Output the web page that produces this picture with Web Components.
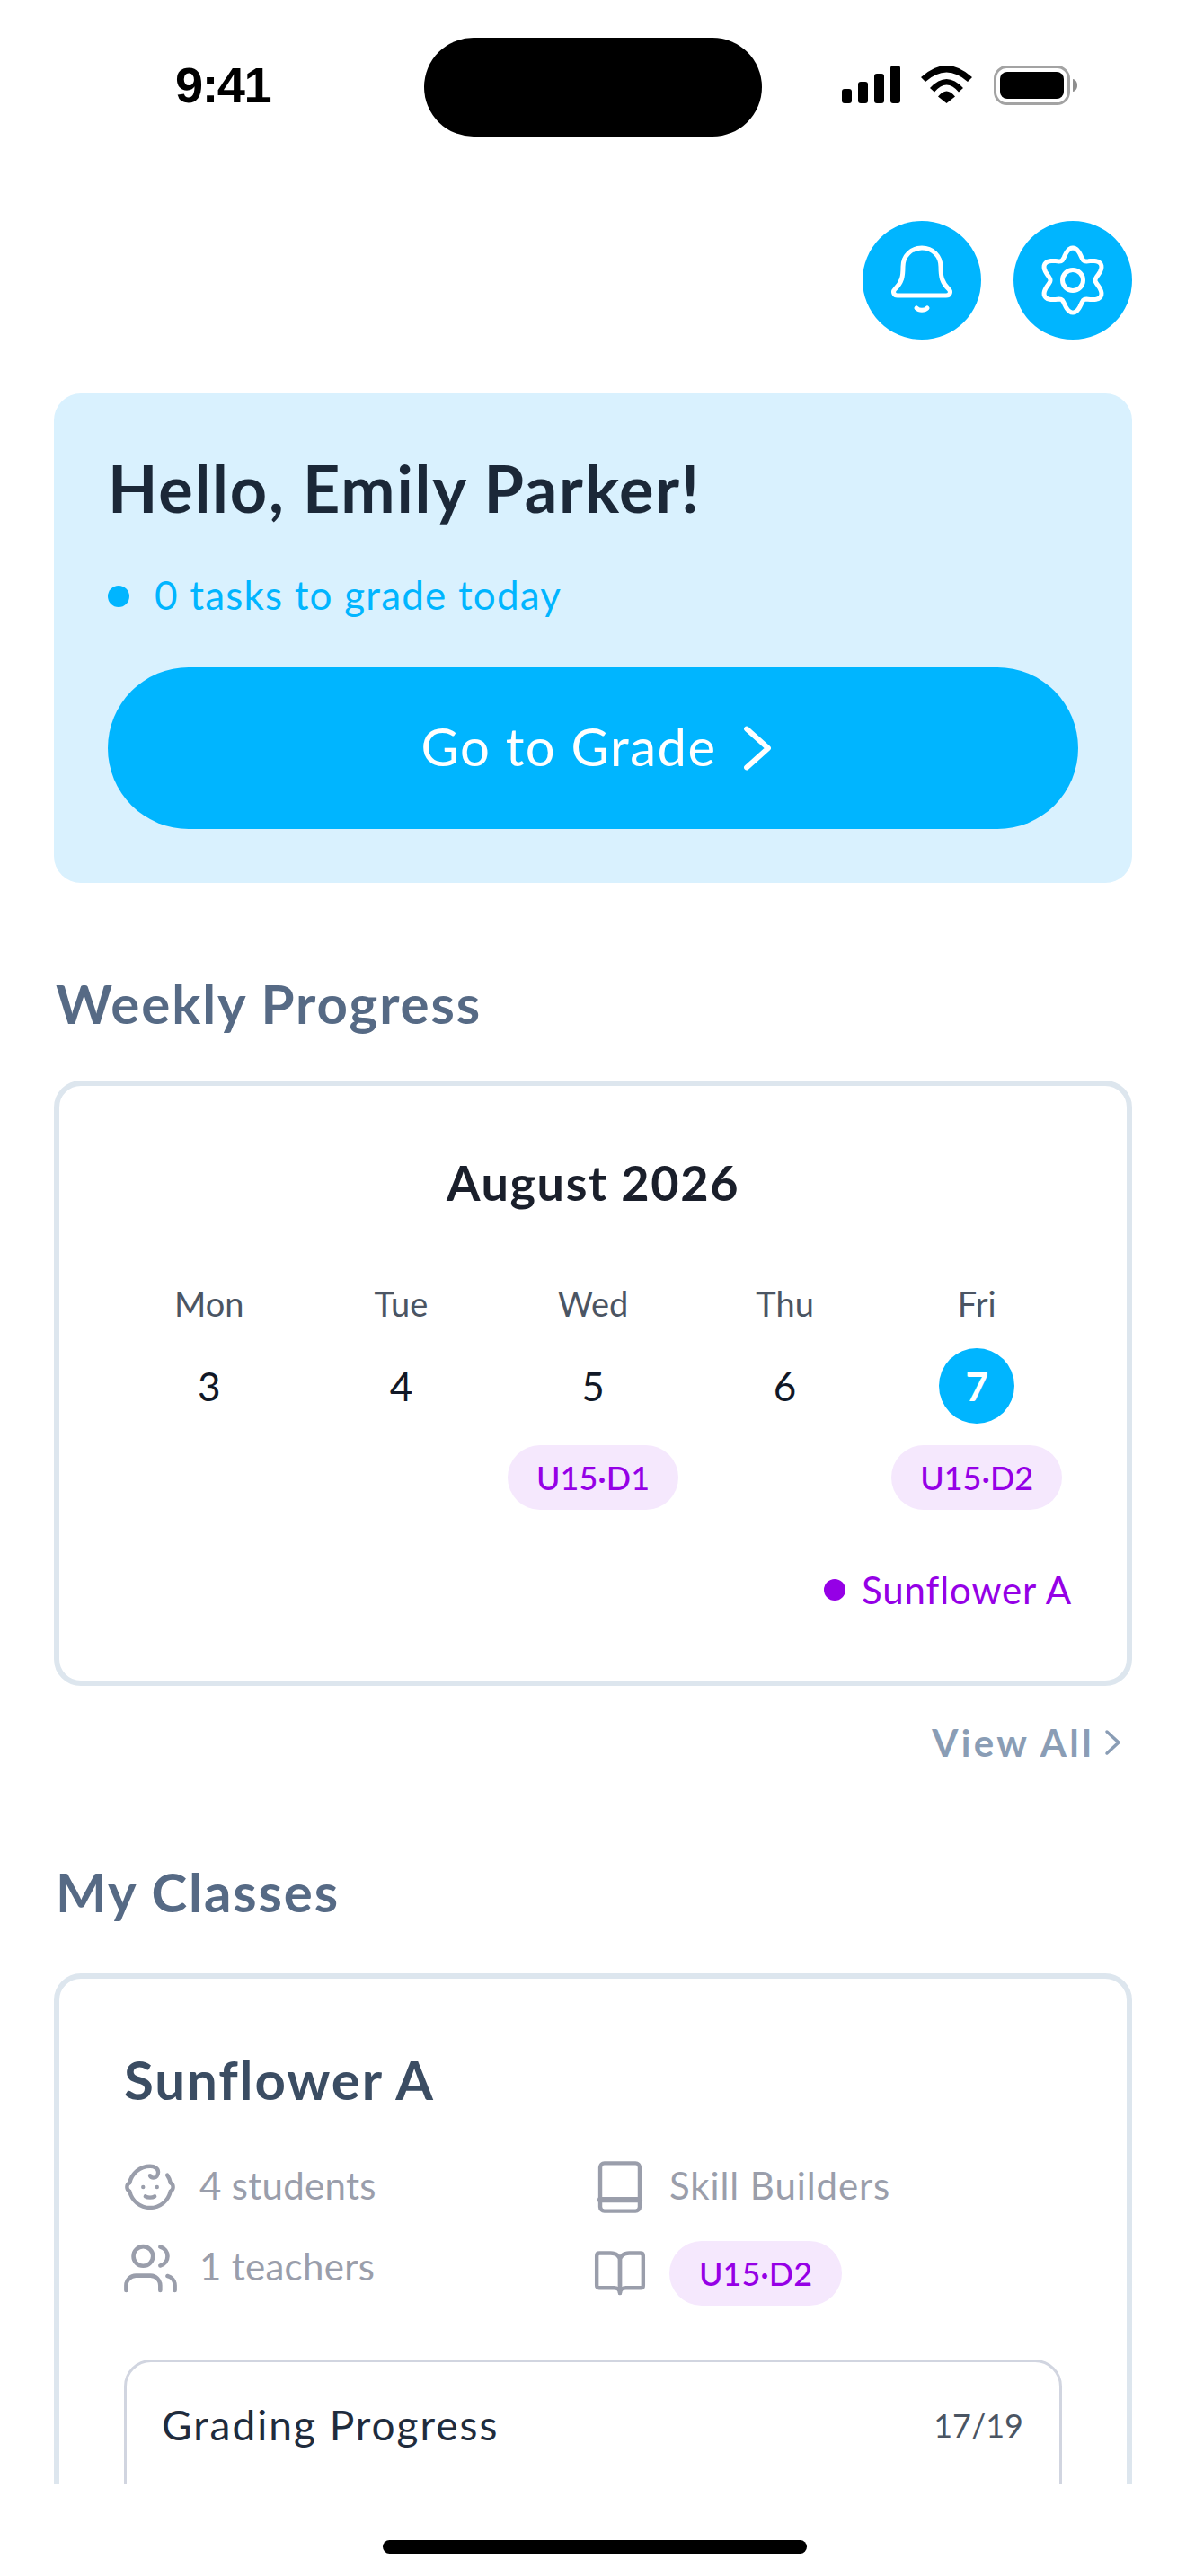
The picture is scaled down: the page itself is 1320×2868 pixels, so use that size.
<!DOCTYPE html>
<html lang="en">
<head>
<meta charset="utf-8">
<title>Teacher Home</title>
<style>
  html, body { margin: 0; background: #fff; }
  body { font-family: Lato, "Noto Sans", sans-serif; }
</style>
</head>
<body>

<app-screen>
  <status-bar></status-bar>
  <top-actions></top-actions>
  <hello-card name="Emily Parker" tasks="0 tasks to grade today" action="Go to Grade"></hello-card>
  <section-title style="margin-top:94px;margin-bottom:46px">Weekly Progress</section-title>
  <calendar-card></calendar-card>
  <view-all></view-all>
  <section-title style="margin-top:96px;margin-bottom:51px">My Classes</section-title>
  <class-card></class-card>
</app-screen>

<script>
const PRIMARY = "#00b5ff";

// small helper, every component below uses the same shadow setup
function setShadow(el, html) {
  const shadow = el.attachShadow({ mode: "open" });
  shadow.innerHTML = html;
  return shadow;
}

class AppScreen extends HTMLElement {
  constructor() {
    super();
    setShadow(this, `
      <style>
        :host { display: flex; flex-direction: column; width: 1320px; height: 2868px; background: #fff; overflow: hidden; }
        .scroll { height: 2766px; overflow: hidden; display: flex; flex-direction: column; flex: none; }
        .home { flex: 1; display: flex; justify-content: center; padding: 62px 0 0 4px; box-sizing: border-box; }
        .home i { display: block; width: 472px; height: 15px; border-radius: 8px; background: #000; }
      </style>
      <div class="scroll"><slot></slot></div>
      <div class="home"><i></i></div>
    `);
  }
}

class StatusBar extends HTMLElement {
  constructor() {
    super();
    setShadow(this, `
      <style>
        :host { display: grid; grid-template-columns: 472px 376px 1fr; padding-top: 42px; height: 110px; flex: none; }
        .time { font: 700 56px/110px "Liberation Sans", sans-serif; letter-spacing: -1.5px; color: #000; padding-left: 195px; margin-top: -2px; }
        .island { background: #000; border-radius: 55px; }
        .icons { display: flex; align-items: flex-start; gap: 23px; padding: 31px 0 0 89px; }
        svg { display: block; flex: none; }
      </style>
      <div class="time">9:41</div>
      <div class="island"></div>
      <div class="icons">
        <svg width="65" height="42" viewBox="0 0 65 42">
          <rect x="0" y="26" width="11" height="16" rx="3"/>
          <rect x="18" y="18" width="11" height="24" rx="3"/>
          <rect x="36" y="9" width="11" height="33" rx="3"/>
          <rect x="54" y="0" width="11" height="42" rx="3"/>
        </svg>
        <svg width="58" height="42" viewBox="0 0 58 42">
          <path d="M0 13Q28.5 -13 57 13L52 18Q28.5 -3 5 18Z"/>
          <path d="M10 25Q28.5 5 47 25L42 29.5Q28.5 13.5 15 29.5Z"/>
          <path d="M19 34.5Q28.5 22.5 38 34.5L28.5 42Z"/>
        </svg>
        <svg width="94" height="44" viewBox="0 0 94 44">
          <rect x="1.5" y="1.5" width="82" height="41" rx="13" fill="none" stroke="#a3a3a3" stroke-width="3"/>
          <rect x="7" y="7" width="71" height="30" rx="8"/>
          <path d="M88 15c3 .5 5 3 5 7s-2 6.500-5 7z" fill="#8e8e8e"/>
        </svg>
      </div>
    `);
  }
}

class IconButton extends HTMLElement {
  constructor() {
    super();
    setShadow(this, `
      <style>
        :host { display: flex; width: 132px; height: 132px; border-radius: 50%; background: ${PRIMARY}; }
        svg { display: block; }
      </style>
      <svg width="132" height="132" viewBox="0 0 132 132" fill="none" stroke="#fff" stroke-width="5" stroke-linecap="round" stroke-linejoin="round">
        ${this.getAttribute("icon") === "gear" ? gearIcon() : bellIcon()}
      </svg>
    `);
  }
}

function bellIcon() {
  return `<path d="M66 30C54 30 45 39 45 51C45 62 44 68 36 76C33 79 35 83 39 83H93C97 83 99 79 96 76C88 68 87 62 87 51C87 39 78 30 66 30Z"/>
          <path d="M60 97C63 100 69 100 72 97"/>`;
}

// six rounded lobes, worked out from the polar shape instead of a long path
function gearIcon() {
  let d = "";
  for (let i = 0; i < 120; i++) {
    const t = (i / 120) * Math.PI * 2;
    const r = 30.5 + 5.5 * Math.cos(6 * t);
    const x = 66 + r * Math.sin(t);
    const y = 66 - r * Math.cos(t);
    d += (i ? "L" : "M") + x.toFixed(2) + " " + y.toFixed(2);
  }
  return `<path d="${d}Z"/><circle cx="66" cy="66" r="11.500"/>`;
}

class TopActions extends HTMLElement {
  constructor() {
    super();
    setShadow(this, `
      <style>
        :host { display: flex; justify-content: flex-end; gap: 36px; padding: 94px 60px 60px 0; flex: none; }
      </style>
      <icon-button icon="bell"></icon-button>
      <icon-button icon="gear"></icon-button>
    `);
  }
}

class HelloCard extends HTMLElement {
  constructor() {
    super();
    setShadow(this, `
      <style>
        :host { display: block; margin: 0 60px; padding: 55px 60px 60px; background: #d9f1fe; border-radius: 30px; flex: none; }
        h1 { margin: 0; font: 700 72px/100px Lato, sans-serif; letter-spacing: 1.8px; color: #1b2838; }
        .sub { display: flex; align-items: center; gap: 28px; margin-top: 39px; font: 400 44px/60px Lato, sans-serif; letter-spacing: 1.200px; color: ${PRIMARY}; }
        .sub i { width: 24px; height: 24px; margin-top: 4px; border-radius: 50%; background: ${PRIMARY}; }
        .btn { display: flex; align-items: center; justify-content: center; gap: 29px; box-sizing: border-box; height: 180px; margin-top: 51px; padding: 0 0 4px 7px; border-radius: 90px; background: ${PRIMARY}; color: #fff; font: 400 58px/1 Lato, sans-serif; letter-spacing: 1.500px; }
        .btn svg { margin-top: 4px; }
      </style>
      <h1>Hello, ${this.getAttribute("name")}!</h1>
      <div class="sub"><i></i><span>${this.getAttribute("tasks")}</span></div>
      <div class="btn">
        <span>${this.getAttribute("action")}</span>
        <svg width="32" height="50" viewBox="0 0 32 50" fill="none" stroke="#fff" stroke-width="5.800" stroke-linecap="round" stroke-linejoin="round"><path d="M4 3.500L28 25L4 46.500"/></svg>
      </div>
    `);
  }
}

class SectionTitle extends HTMLElement {
  constructor() {
    super();
    setShadow(this, `
      <style>
        :host { display: block; margin: 0 60px 44px 62px; font: 700 60px/80px Lato, sans-serif; letter-spacing: 1.900px; color: #566a85; flex: none; }
      </style>
      <slot></slot>
    `);
  }
}

class PillTag extends HTMLElement {
  constructor() {
    super();
    setShadow(this, `
      <style>
        :host { display: inline-flex; align-items: center; justify-content: center; width: 190px; height: 72px; border-radius: 36px; background: #f5e8fd; color: #9500e6; font: 500 36px/1 Lato, sans-serif; letter-spacing: 0; }
      </style>
      <slot></slot>
    `);
  }
}

class DayCell extends HTMLElement {
  constructor() {
    super();
    const tag = this.getAttribute("tag");
    setShadow(this, `
      <style>
        :host { display: flex; flex-direction: column; align-items: center; }
        .name { font: 400 38px/52px Lato, sans-serif; color: #4b5563; }
        .num { display: flex; align-items: center; justify-content: center; width: 84px; height: 84px; margin-top: 24px; border-radius: 50%; font: 400 44px/1 Lato, sans-serif; color: #111827; }
        :host([today]) .num { background: ${PRIMARY}; color: #fff; font-weight: 700; }
        .tag { height: 72px; margin-top: 24px; }
      </style>
      <div class="name">${this.getAttribute("name")}</div>
      <div class="num">${this.getAttribute("num")}</div>
      <div class="tag">${tag ? `<pill-tag>${tag}</pill-tag>` : ""}</div>
    `);
  }
}

class CalendarCard extends HTMLElement {
  constructor() {
    super();
    setShadow(this, `
      <style>
        :host { display: block; margin: 0 60px; padding: 72px 60px 71px; border: 6px solid #dde6ee; border-radius: 30px; flex: none; }
        .month { text-align: center; font: 700 54px/72px Lato, sans-serif; letter-spacing: 1.600px; color: #1a1f2b; }
        .days { display: grid; grid-template-columns: repeat(5, 1fr); margin-top: 72px; }
        .legend { display: flex; justify-content: flex-end; align-items: center; gap: 18px; margin: 59px 1px 0 0; font: 400 42px/60px Lato, sans-serif; letter-spacing: .900px; color: #9500e6; }
        .legend i { width: 24px; height: 24px; border-radius: 50%; background: #9500e6; }
      </style>
      <div class="month">August 2026</div>
      <div class="days">
        <day-cell name="Mon" num="3"></day-cell>
        <day-cell name="Tue" num="4"></day-cell>
        <day-cell name="Wed" num="5" tag="U15·D1"></day-cell>
        <day-cell name="Thu" num="6"></day-cell>
        <day-cell name="Fri" num="7" tag="U15·D2" today></day-cell>
      </div>
      <div class="legend"><i></i><span>Sunflower A</span></div>
    `);
  }
}

class ViewAll extends HTMLElement {
  constructor() {
    super();
    setShadow(this, `
      <style>
        :host { display: flex; justify-content: flex-end; align-items: center; gap: 11px; margin: 33px 71px 0 0; font: 700 42px/60px Lato, sans-serif; letter-spacing: 3.400px; color: #8a9db5; flex: none; }
      </style>
      <span>View All</span>
      <svg width="20" height="30" viewBox="0 0 20 30" fill="none" stroke="#8a9db5" stroke-width="3.500" stroke-linecap="round" stroke-linejoin="round"><path d="M3 3L16 15L3 27"/></svg>
    `);
  }
}

const ICONS = {
  baby: `<path d="M10 16c.5.3 1.200.5 2 .5s1.500-.2 2-.5"/><path d="M15 12h.01"/><path d="M9 12h.01"/><path d="M19.380 6.813A9 9 0 0 1 20.800 10.200a2 2 0 0 1 0 3.600 9 9 0 0 1-17.600 0 2 2 0 0 1 0-3.600A9 9 0 0 1 12 3c2 0 3.500 1.100 3.500 2.500s-.9 2.500-2 2.500c-.8 0-1.500-.4-1.500-1"/>`,
  users: `<path d="M16 21v-2a4 4 0 0 0-4-4H6a4 4 0 0 0-4 4v2"/><circle cx="9" cy="7" r="4"/><path d="M22 21v-2a4 4 0 0 0-3-3.870"/><path d="M16 3.130a4 4 0 0 1 0 7.750"/>`,
  book: `<rect x="3.500" y="1.700" width="17" height="20.600" rx="1.800"/><path d="M3.500 17.500h17" stroke-width="2.400"/>`,
  open: `<path d="M2 4.500c0-.8.500-1.200 1.200-1.200H8c2.300 0 4 1.200 4 3.500v13.700c0-1.500-1.200-2.200-2.600-2.200H3c-.6 0-1-.4-1-1z"/><path d="M22 4.500c0-.8-.5-1.200-1.200-1.200H16c-2.300 0-4 1.200-4 3.500v13.700c0-1.500 1.200-2.200 2.600-2.200H21c.6 0 1-.4 1-1z"/>`
};

class InfoItem extends HTMLElement {
  constructor() {
    super();
    const size = this.getAttribute("size") || 65;
    setShadow(this, `
      <style>
        :host { display: flex; align-items: center; gap: 26px; min-height: 54px; font: 400 42px/54px Lato, sans-serif; letter-spacing: .300px; color: #9a9eab; }
        .ic { display: flex; align-items: center; justify-content: center; width: 58px; height: 54px; flex: none; }
        svg { flex: none; }
        :host(:not([tag])) .txt { margin-top: -4px; }
      </style>
      <div class="ic">
        <svg width="${size}" height="${size}" viewBox="0 0 24 24" fill="none" stroke="#9a9eab" stroke-width="1.700" stroke-linecap="round" stroke-linejoin="round">${ICONS[this.getAttribute("icon")]}</svg>
      </div>
      <div class="txt"><slot></slot></div>
    `);
  }
}

class ProgressPanel extends HTMLElement {
  constructor() {
    super();
    setShadow(this, `
      <style>
        :host { display: block; border: 3px solid #d1d5e0; border-radius: 30px; padding: 38px 40px 0 39px; height: 300px; }
        .row { display: flex; justify-content: space-between; align-items: center; }
        .label { font: 400 46px/64px Lato, sans-serif; letter-spacing: 2px; color: #1f2c3d; }
        .count { font: 400 36px/64px Lato, sans-serif; color: #4b5563; }
      </style>
      <div class="row">
        <span class="label">${this.getAttribute("label")}</span>
        <span class="count">${this.getAttribute("count")}</span>
      </div>
    `);
  }
}

class ClassCard extends HTMLElement {
  constructor() {
    super();
    setShadow(this, `
      <style>
        :host { display: block; margin: 0 60px; padding: 72px 72px 73px; border: 6px solid #dde6ee; border-radius: 30px; flex: none; }
        h2 { margin: 0; font: 700 60px/80px Lato, sans-serif; letter-spacing: 1.900px; color: #3b4d63; }
        .info { display: flex; margin-top: 53px; }
        .col { display: flex; flex-direction: column; }
        .left { width: 523px; gap: 36px; }
        .right { gap: 33px; }
        progress-panel { margin-top: 60px; }
      </style>
      <h2>Sunflower A</h2>
      <div class="info">
        <div class="col left">
          <info-item icon="baby" size="62">4 students</info-item>
          <info-item icon="users">1 teachers</info-item>
        </div>
        <div class="col right">
          <info-item icon="book" size="62" style="letter-spacing:.9px">Skill Builders</info-item>
          <info-item icon="open" size="62" tag><pill-tag style="width:192px">U15·D2</pill-tag></info-item>
        </div>
      </div>
      <progress-panel label="Grading Progress" count="17/19"></progress-panel>
    `);
  }
}

customElements.define("app-screen", AppScreen);
customElements.define("status-bar", StatusBar);
customElements.define("icon-button", IconButton);
customElements.define("top-actions", TopActions);
customElements.define("hello-card", HelloCard);
customElements.define("section-title", SectionTitle);
customElements.define("pill-tag", PillTag);
customElements.define("day-cell", DayCell);
customElements.define("calendar-card", CalendarCard);
customElements.define("view-all", ViewAll);
customElements.define("info-item", InfoItem);
customElements.define("progress-panel", ProgressPanel);
customElements.define("class-card", ClassCard);
</script>
</body>
</html>
